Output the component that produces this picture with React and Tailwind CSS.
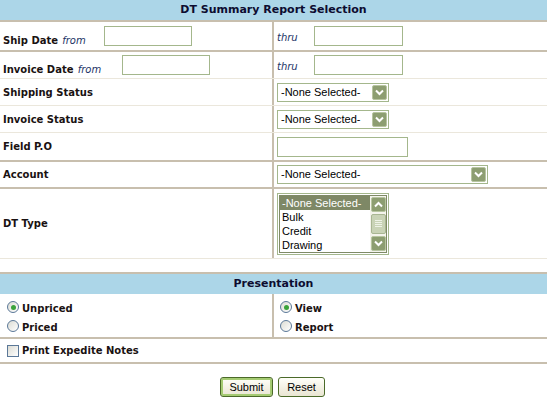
import React from "react";

const LBL = "font-['DejaVu_Sans',Verdana,sans-serif] font-bold text-[10px] text-[#1a1212]";
const TITLE = "font-['DejaVu_Sans',Verdana,sans-serif] font-bold text-[11px] text-[#0c0c30]";
const ITAL = "font-['DejaVu_Sans',Verdana,sans-serif] italic text-[10px] text-[#223366]";
const CTRL = "font-['Liberation_Sans',Arial,sans-serif] text-[11px] text-black";

function TextBox({ w }) {
  return <div className={`h-[20px] border border-[#a4b78c] bg-white ${w}`} />;
}

function Arrow({ up }) {
  return (
    <div className="w-[15px] h-[15px] rounded-[2px] border border-[#b7c5a0] bg-[#8d9e71] flex items-center justify-center shrink-0">
      <svg width="9" height="7" viewBox="0 0 9 7">
        {up ? (
          <path d="M1 5.5 L4.5 2 L8 5.5" stroke="white" strokeWidth="2" fill="none" />
        ) : (
          <path d="M1 1.5 L4.5 5 L8 1.5" stroke="white" strokeWidth="2" fill="none" />
        )}
      </svg>
    </div>
  );
}

function Select({ w }) {
  return (
    <div className={`flex items-center h-[19px] border border-[#a4b78c] bg-white pl-[3px] pr-[1px] ${w}`}>
      <span className={`${CTRL} flex-1 leading-none`}>-None Selected-</span>
      <Arrow />
    </div>
  );
}

function ListBox() {
  const items = ["Bulk", "Credit", "Drawing"];
  return (
    <div className="w-[112px] h-[62px] border border-[#a4b78c] bg-white p-[1px] flex">
      <div className="flex-1 border border-[#7f8a66] border-r-0 flex flex-col overflow-hidden">
        <div className={`${CTRL} h-[14px] leading-[14px] bg-[#7e8866] text-white pl-[2px]`}>-None Selected-</div>
        {items.map((t) => (
          <div key={t} className={`${CTRL} h-[14px] leading-[14px] text-[#22145a] pl-[2px]`}>{t}</div>
        ))}
      </div>
      <div className="w-[17px] flex flex-col items-center justify-between border border-[#7f8a66] border-l-0 bg-[#f4f4ec] py-[1px]">
        <Arrow up />
        <div className="w-[15px] flex-1 my-[2px] rounded-[2px] border border-[#a9b693] bg-[#c9d3b6] flex flex-col items-center justify-center gap-[1px]">
          <div className="w-[7px] h-px bg-[#eef2e6]" />
          <div className="w-[7px] h-px bg-[#eef2e6]" />
          <div className="w-[7px] h-px bg-[#eef2e6]" />
          <div className="w-[7px] h-px bg-[#eef2e6]" />
        </div>
        <Arrow />
      </div>
    </div>
  );
}

function Radio({ checked, label }) {
  return (
    <div className="flex items-center h-[19px]">
      <div className="w-[12px] h-[12px] rounded-full border border-[#5b7898] bg-gradient-to-br from-[#dcdcd4] to-white flex items-center justify-center -mt-[3px]">
        {checked && <div className="w-[5px] h-[5px] rounded-full bg-[#3aa33a]" />}
      </div>
      <span className={`${LBL} ml-[3px]`}>{label}</span>
    </div>
  );
}

function Row({ h, border, left, right }) {
  return (
    <div className={`flex ${h} ${border}`}>
      <div className="w-[274px] border-r-2 border-[#c8bfae] flex items-center pl-[3px]">{left}</div>
      <div className="flex-1 flex items-center pl-[3px]">{right}</div>
    </div>
  );
}

function Button({ label, w, primary }) {
  return (
    <div
      className={`${CTRL} ${w} h-[20px] rounded-[3px] border border-[#4b6a29] bg-gradient-to-b from-[#fffffa] to-[#e9e5d2] flex items-center justify-center ${
        primary ? "shadow-[inset_0_0_0_2px_#a5cb73]" : ""
      }`}
    >
      {label}
    </div>
  );
}

export default function App() {
  const dark = "border-b-2 border-[#c8bfae]";
  const light = "border-b border-[#ebe7dc]";
  return (
    <div className="w-[547px] h-[412px] bg-white overflow-hidden">
      <div className={`h-[22px] bg-[#acd6e8] border-b-2 border-[#c8bfae] flex items-center justify-center ${TITLE}`}>
        DT Summary Report Selection
      </div>

      <Row
        h="h-[30px]"
        border={dark}
        left={
          <>
            <span className="pt-[3px] w-[81px] shrink-0 whitespace-nowrap">
              <span className={LBL}>Ship Date</span> <span className={ITAL}>from</span>
            </span>
            <div className="ml-[20px]"><TextBox w="w-[88px]" /></div>
          </>
        }
        right={
          <>
            <span className={`${ITAL} pt-[3px] w-[21px] shrink-0 text-[#1a1a40]`}>thru</span>
            <div className="ml-[16px]"><TextBox w="w-[89px]" /></div>
          </>
        }
      />
      <Row
        h="h-[27px]"
        border={light}
        left={
          <>
            <span className="pt-[3px] w-[99px] shrink-0 whitespace-nowrap">
              <span className={LBL}>Invoice Date</span> <span className={ITAL}>from</span>
            </span>
            <div className="ml-[20px]"><TextBox w="w-[88px]" /></div>
          </>
        }
        right={
          <>
            <span className={`${ITAL} pt-[3px] w-[21px] shrink-0 text-[#1a1a40]`}>thru</span>
            <div className="ml-[16px]"><TextBox w="w-[89px]" /></div>
          </>
        }
      />
      <Row h="h-[27px]" border={light} left={<span className={LBL}>Shipping Status</span>} right={<Select w="w-[112px]" />} />
      <Row h="h-[27px]" border={light} left={<span className={LBL}>Invoice Status</span>} right={<Select w="w-[112px]" />} />
      <Row h="h-[29px]" border={dark} left={<span className={LBL}>Field P.O</span>} right={<TextBox w="w-[131px]" />} />
      <Row h="h-[27px]" border={dark} left={<span className={LBL}>Account</span>} right={<Select w="w-[211px]" />} />
      <Row h="h-[70px]" border={light} left={<span className={LBL}>DT Type</span>} right={<ListBox />} />

      <div className="h-[13px]" />

      <div className={`h-[22px] bg-[#acd6e8] border-t-2 border-[#c8bfae] flex items-center justify-center ${TITLE}`}>
        Presentation
      </div>
      <div className="flex h-[45px] border-b-2 border-[#c8bfae]">
        <div className="w-[274px] border-r-2 border-[#c8bfae] flex flex-col pl-[7px] pt-[5px]">
          <Radio checked label="Unpriced" />
          <Radio label="Priced" />
        </div>
        <div className="flex-1 flex flex-col pl-[6px] pt-[5px]">
          <Radio checked label="View" />
          <Radio label="Report" />
        </div>
      </div>
      <div className="h-[25px] border-b-2 border-[#c8bfae] flex items-center pl-[7px]">
        <div className="w-[12px] h-[12px] border border-[#5b7898] bg-gradient-to-br from-[#dcdcd4] to-white" />
        <span className={`${LBL} ml-[3px]`}>Print Expedite Notes</span>
      </div>

      <div className="flex justify-center gap-[5px] mt-[13px] pr-[2px]">
        <Button label="Submit" w="w-[53px]" primary />
        <Button label="Reset" w="w-[47px]" />
      </div>
    </div>
  );
}
